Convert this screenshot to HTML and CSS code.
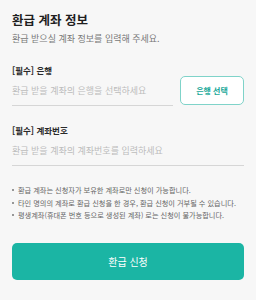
FILE: index.html
```html
<!DOCTYPE html>
<html lang="ko">
<head>
    <meta charset="UTF-8">
    <meta name="viewport" content="width=device-width, initial-scale=1.0">
    <title>환급 계좌 정보</title>
    <link rel="stylesheet" href="styles.css">
</head>
<body>
    <div class="page">
        <h1 class="title">환급 계좌 정보</h1>
        <p class="subtitle">환급 받으실 계좌 정보를 입력해 주세요.</p>

        <div class="field">
            <label class="label">[필수] 은행</label>
            <div class="row">
                <input type="text" class="input" placeholder="환급 받을 계좌의 은행을 선택하세요" readonly>
                <button class="bank-btn">은행 선택</button>
            </div>
        </div>

        <div class="field">
            <label class="label">[필수] 계좌번호</label>
            <input type="text" class="input" placeholder="환급 받을 계좌의 계좌번호를 입력하세요">
        </div>

        <ul class="notes">
            <li>환급 계좌는 신청자가 보유한 계좌로만 신청이 가능합니다.</li>
            <li>타인 명의의 계좌로 환급 신청을 한 경우, 환급 신청이 거부될 수 있습니다.</li>
            <li>평생계좌(휴대폰 번호 등으로 생성된 계좌) 로는 신청이 불가능합니다.</li>
        </ul>

        <button class="submit-btn">환급 신청</button>
    </div>
</body>
</html>
```

FILE: styles.css
```css
body {
    margin: 0;
    background-color: #f7f7f7;
    font-family: "Noto Sans CJK KR", "Noto Sans", sans-serif;
    color: #222;
}

.page {
    padding: 10px 12px;
}

.title {
    margin: 0;
    font-size: 12.5px;
    font-weight: 700;
    line-height: 20px;
    color: #1f1f1f;
}

.subtitle {
    margin: 2px 0 0;
    font-size: 9px;
    line-height: 14px;
    color: #777;
}

.field {
    margin-top: 18px;
}

.label {
    display: block;
    font-size: 8.5px;
    font-weight: 700;
    line-height: 12px;
    color: #2a2a2a;
}

.row {
    display: flex;
    align-items: flex-end;
    gap: 7px;
}

.input {
    display: block;
    width: 100%;
    box-sizing: border-box;
    height: 30px;
    padding: 0;
    border: none;
    border-bottom: 1px solid #d6d6d6;
    background: transparent;
    font-family: inherit;
    font-size: 9px;
    outline: none;
}

.input::placeholder {
    color: #bcbcbc;
}

.row .input {
    flex: 1;
}

.bank-btn {
    flex: none;
    width: 64px;
    height: 29px;
    margin-bottom: 1px;
    border: 1.5px solid #7fd3c9;
    border-radius: 5px;
    background: #fff;
    color: #17a898;
    font-family: inherit;
    font-size: 8px;
    font-weight: 700;
}

.notes {
    margin: 18px 0 0;
    padding: 0 0 0 6px;
    list-style: none;
}

.notes li {
    position: relative;
    font-size: 7.2px;
    line-height: 12.5px;
    color: #666;
}

.notes li::before {
    content: "";
    position: absolute;
    left: -6px;
    top: 5px;
    width: 2px;
    height: 2px;
    border-radius: 50%;
    background: #777;
}

.submit-btn {
    display: block;
    width: 100%;
    height: 37px;
    margin-top: 21px;
    border: none;
    border-radius: 5px;
    background-color: #1bb5a4;
    color: #fff;
    font-family: inherit;
    font-size: 10px;
}
```
